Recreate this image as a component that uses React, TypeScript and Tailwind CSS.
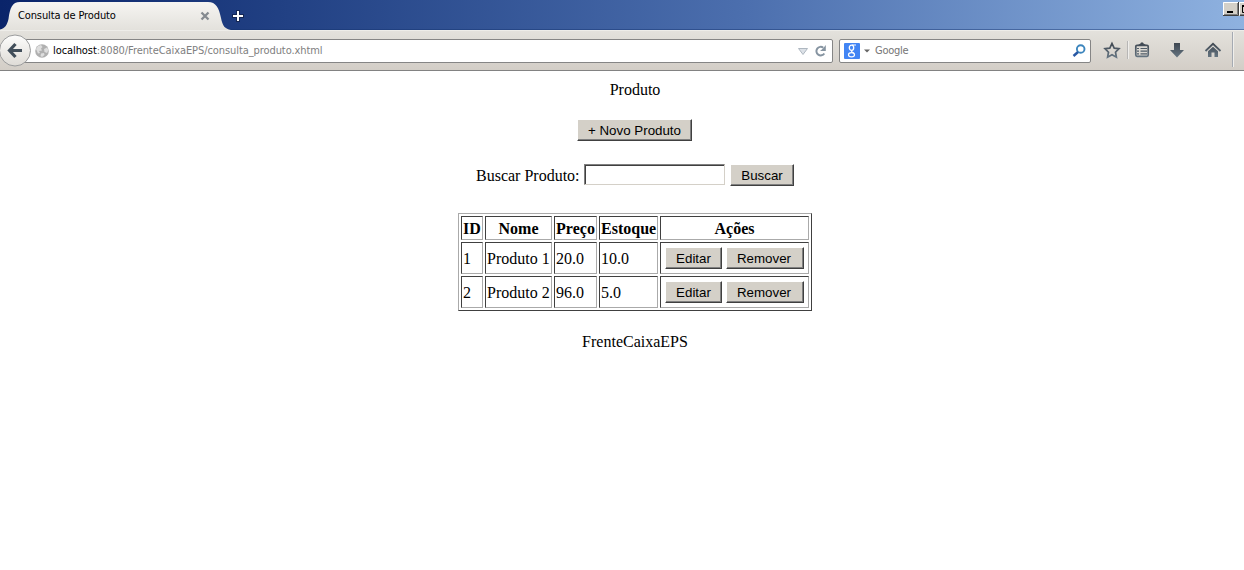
import React from "react";

const ui = "font-['DejaVu_Sans_Condensed','DejaVu_Sans',sans-serif] [font-stretch:condensed]";

function WinButton({ children, className }: { children: React.ReactNode; className: string }) {
  return (
    <button
      className={`h-[22px] shrink-0 border border-t-white border-l-white border-r-[#404040] border-b-[#404040] bg-[#d4d0c8] pt-[2px] font-['Liberation_Sans',Arial,sans-serif] text-[13.33px] leading-[18px] whitespace-nowrap text-black shadow-[inset_-1px_-1px_0_#808080] ${className}`}
    >
      {children}
    </button>
  );
}

function TitleBar() {
  return (
    <div className="flex h-[30px] items-start justify-between bg-linear-to-r from-[#0a246a] via-[#4c6fae] via-60% to-[#8fb2e0] shadow-[inset_0_-1px_0_rgba(20,50,110,0.45)]">
      <div className="relative flex h-[30px] w-[245px] shrink-0">
        <svg className="absolute top-0 left-0" width="245" height="30" viewBox="0 0 245 30">
          <defs>
            <linearGradient id="tab" x1="0" y1="0" x2="0" y2="1">
              <stop offset="0" stopColor="#f6f5f2" />
              <stop offset="1" stopColor="#e3e1dc" />
            </linearGradient>
          </defs>
          <path d="M0 30V29.500C5 28.500 7 25 8.500 19C10 8 12 2 20 2H208C216 2 219 8 221 18C222.500 26 225 29 231 30Z" fill="url(#tab)" />
          <path d="M201.500 12.500L208.500 19.500M208.500 12.500L201.500 19.500" stroke="#858a90" strokeWidth="2.300" />
          <path d="M238 10V22M232 16H244" stroke="#142653" strokeWidth="4" />
          <path d="M238 11V21M233 16H243" stroke="#fff" strokeWidth="2" />
        </svg>
        <span className={`relative mt-[9px] ml-[18px] text-[11px] leading-[14px] tracking-[-0.13px] whitespace-nowrap text-black ${ui}`}>Consulta de Produto</span>
      </div>
      <svg className="mt-[2px] shrink-0" width="21" height="14" viewBox="0 0 21 14">
        <path d="M0 0H21V14H0Z" fill="#d4d0c8" />
        <path d="M.5 13V.5H15M16.500 13V.5H21" fill="none" stroke="#fff" />
        <path d="M15.500 0V13.500H0M17 13.500H21" fill="none" stroke="#404040" />
        <path d="M14.500 1V12.500H1M17 12.500H21" fill="none" stroke="#808080" />
        <path d="M4 9H10V11H4Z" fill="#000" />
        <path d="M21 10.500H19.500V4H21" fill="none" stroke="#000" />
        <path d="M19 4H21" stroke="#000" strokeWidth="2" />
      </svg>
    </div>
  );
}

function BackButton() {
  return (
    <svg className="relative -mr-[15px] shrink-0" width="32" height="34" viewBox="0 0 32 34">
      <defs>
        <linearGradient id="back" x1="0" y1="0" x2="0" y2="1">
          <stop offset="0" stopColor="#fdfdfc" />
          <stop offset="1" stopColor="#dedbd6" />
        </linearGradient>
      </defs>
      <circle cx="15" cy="16.500" r="15.500" fill="url(#back)" stroke="#9b9c9d" />
      <path d="M15.500 10L9.500 16.500L15.500 23M10 16.500H22" fill="none" stroke="#414e5a" strokeWidth="3.200" />
    </svg>
  );
}

function ToolbarIcons() {
  return (
    <svg className="shrink-0" width="153" height="39" viewBox="1091 31 153 39">
      <defs>
        <linearGradient id="ico" x1="0" y1="42" x2="0" y2="58" gradientUnits="userSpaceOnUse">
          <stop offset="0" stopColor="#3c444d" />
          <stop offset="1" stopColor="#677784" />
        </linearGradient>
      </defs>
      <path d="M1112 43.500L1114.200 48.100L1119 48.700L1115.500 52.200L1116.400 57.200L1112 54.800L1107.600 57.200L1108.500 52.200L1105 48.700L1109.800 48.100Z" fill="none" stroke="url(#ico)" strokeWidth="1.700" />
      <path d="M1127.500 41V59" stroke="#b7b6b5" />
      <path d="M1128.500 41V59" stroke="#efeeec" />
      <path d="M1138 45L1140.500 43.500L1141 42.500H1143L1143.500 43.500L1146 45Z" fill="url(#ico)" />
      <rect x="1135.800" y="45.300" width="12.400" height="11" rx="1.200" fill="none" stroke="url(#ico)" strokeWidth="1.700" />
      <path d="M1137 48.500H1139M1140.500 48.500H1147M1137 51.200H1139M1140.500 51.200H1147M1137 53.900H1139M1140.500 53.900H1147" stroke="#505d68" strokeWidth="1.200" />
      <path d="M1174 43H1180V50H1184L1177 57.500L1170 50H1174Z" fill="url(#ico)" />
      <path d="M1205.500 51L1213 43.800L1220.500 51" fill="none" stroke="url(#ico)" strokeWidth="1.800" />
      <path d="M1208 51.200L1213 46.700L1218 51.200V57H1214.500V52.500H1211.500V57H1208Z" fill="url(#ico)" />
      <path d="M1232.500 32V67" stroke="#a5aab2" />
      <path d="M1233.500 32V67" stroke="#f0efec" />
    </svg>
  );
}

function Toolbar() {
  return (
    <div className="flex h-[41px] items-center border-t border-b border-t-[#eeede9] border-b-[#828282] bg-linear-to-b from-[#e3e1dc] to-[#d3cec7]">
      <BackButton />
      <div className="flex h-[24px] w-[816px] shrink-0 items-center rounded-[2px] border border-[#858585] bg-white pl-[17px]">
        <svg className="shrink-0" width="14" height="14" viewBox="0 0 14 14">
          <circle cx="7" cy="7" r="6.800" fill="#b0b0b0" />
          <path d="M1 5L3 2L6 1L7.500 3L6 4.500L7 6.500L4 7L5 9L3 9.500ZM9 5L12 3.500L13.500 6L12 9L9.500 8ZM6 9.500L9 9L9.500 11L7 13L5.500 12Z" fill="#dedede" />
        </svg>
        <span className={`ml-[4px] grow text-[11px] leading-[14px] tracking-[-0.08px] whitespace-nowrap text-[#808080] ${ui}`}>
          <span className="text-black">localhost</span>:8080/FrenteCaixaEPS/consulta_produto.xhtml
        </span>
        <svg className="mr-[4px] shrink-0" width="30" height="16" viewBox="798 42 30 16">
          <path d="M798.500 47.500H807.500L803 53.500Z" fill="#dce1e7" stroke="#aeb7c0" />
          <path d="M823.300 46.700A4.300 4.300 0 1 0 824.300 52.500" fill="none" stroke="#8694a1" strokeWidth="2" />
          <path d="M825.800 44V50H820L823 47.500Z" fill="#8694a1" />
        </svg>
      </div>
      <div className="ml-[6px] flex h-[24px] w-[252px] shrink-0 items-center rounded-[2px] border border-[#858585] bg-white pl-[4px]">
        <svg className="shrink-0" width="16" height="16" viewBox="0 0 16 16">
          <rect width="16" height="16" rx="1" fill="#4285f4" />
          <ellipse cx="7.500" cy="4.800" rx="2.200" ry="2.600" fill="none" stroke="#fff" strokeWidth="1.300" />
          <path d="M8 2H12M8.500 7.500C6 9 9 9 10 10.500" fill="none" stroke="#fff" strokeWidth="1.100" />
          <ellipse cx="7.500" cy="11.700" rx="3" ry="2.100" fill="none" stroke="#fff" strokeWidth="1.200" />
        </svg>
        <svg className="ml-[4px] shrink-0" width="6" height="4" viewBox="0 0 6 4"><path d="M0 .5H6L3 3.500Z" fill="#666" /></svg>
        <span className={`ml-[5px] grow text-[11px] leading-[14px] tracking-[-0.25px] text-[#757575] ${ui}`}>Google</span>
        <svg className="mr-[4px] shrink-0" width="14" height="14" viewBox="0 0 14 14">
          <circle cx="8.700" cy="5" r="3.800" fill="none" stroke="#3c85bd" strokeWidth="1.900" />
          <path d="M6 8L1.500 12" stroke="#2858a4" strokeWidth="2.400" />
        </svg>
      </div>
      <ToolbarIcons />
    </div>
  );
}

const cell = "border border-t-[#404040] border-l-[#404040] border-r-[#aaaaaa] border-b-[#aaaaaa] px-px";
const textCell = `${cell} pt-[3px] pb-px whitespace-nowrap`;

const products = [
  { id: 1, name: "Produto 1", price: "20.0", stock: "10.0" },
  { id: 2, name: "Produto 2", price: "96.0", stock: "5.0" },
];

export default function App() {
  return (
    <div className="flex h-[570px] w-[1244px] flex-col overflow-hidden bg-white">
      <TitleBar />
      <Toolbar />
      <main className="flex w-[1270px] flex-col items-center font-['Liberation_Serif','Times_New_Roman',serif] text-[16px] leading-[18px] text-black">
        <div className="mt-[10px]">Produto</div>
        <WinButton className="mt-[20px] mr-px w-[115px]">+ Novo Produto</WinButton>
        <div className="mt-[23px] flex h-[22px] items-start">
          <label htmlFor="busca" className="mt-[3px] mr-[4px] w-[104px] whitespace-nowrap">Buscar Produto:</label>
          <input
            id="busca"
            className="h-[21px] w-[141px] border border-t-[#808080] border-l-[#808080] border-r-[#d4d0c8] border-b-[#d4d0c8] bg-white shadow-[inset_1px_1px_0_#404040] outline-none"
          />
          <WinButton className="ml-[5px] w-[64px]">Buscar</WinButton>
        </div>
        <table className="mt-[27px] w-[354px] table-fixed border-separate border-spacing-[2px] border border-t-[#aaaaaa] border-l-[#aaaaaa] border-r-[#404040] border-b-[#404040]">
          <colgroup>
            <col className="w-[22px]" />
            <col className="w-[67px]" />
            <col className="w-[43px]" />
            <col className="w-[59px]" />
            <col className="w-[149px]" />
          </colgroup>
          <thead>
            <tr className="h-[24px]">
              {["ID", "Nome", "Preço", "Estoque", "Ações"].map((h) => (
                <th key={h} className={`${textCell} text-center font-bold`}>{h}</th>
              ))}
            </tr>
          </thead>
          <tbody>
            {products.map((p) => (
              <tr key={p.id} className="h-[32px]">
                <td className={textCell}>{p.id}</td>
                <td className={textCell}>{p.name}</td>
                <td className={textCell}>{p.price}</td>
                <td className={textCell}>{p.stock}</td>
                <td className={`${cell} py-px`}>
                  <div className="flex justify-center gap-[4px]">
                    <WinButton className="w-[57px]">Editar</WinButton>
                    <WinButton className="w-[78px] pr-[2px]">Remover</WinButton>
                  </div>
                </td>
              </tr>
            ))}
          </tbody>
        </table>
        <div className="mt-[22px]">FrenteCaixaEPS</div>
      </main>
    </div>
  );
}
